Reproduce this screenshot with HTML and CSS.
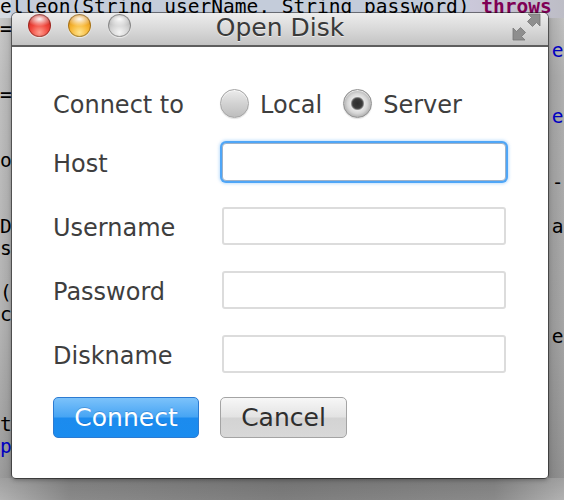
FILE: index.html
```html
<!DOCTYPE html>
<html>
<head>
<meta charset="utf-8">
<title>Open Disk</title>
<link rel="stylesheet" href="styles.css">
</head>
<body>
<div class="editor">
<div class="ln cur">elleon(String userName, String password) <b class="kw">throws</b></div>
<div class="ln">=</div>
<div class="ln"><span class="r fld">e</span></div>
<div class="ln"> </div>
<div class="ln">=</div>
<div class="ln"><span class="r fld">e</span></div>
<div class="ln"> </div>
<div class="ln">o</div>
<div class="ln"><span class="r">-</span></div>
<div class="ln"> </div>
<div class="ln">D<span class="r2">as</span></div>
<div class="ln">s</div>
<div class="ln"> </div>
<div class="ln">(</div>
<div class="ln">c</div>
<div class="ln"><span class="r">e</span></div>
<div class="ln"> </div>
<div class="ln"> </div>
<div class="ln"> </div>
<div class="ln">t</div>
<div class="ln fld">p</div>
</div>

<div class="window">
  <div class="titlebar">
    <div class="lights">
      <span class="light red"></span>
      <span class="light orange"></span>
      <span class="light gray"></span>
    </div>
    <div class="title">Open Disk</div>
    <svg class="resize" width="29" height="28" viewBox="0 0 29 28">
      <path d="M16 1 H28 V13 L24.5 9.5 L20.5 13.5 L15.5 8.5 L19.5 4.5 Z" fill="#8e8e8e" stroke="#777" stroke-width="0.8" stroke-linejoin="round"/>
      <path d="M13 27 H1 V15 L4.5 18.5 L8.5 14.5 L13.5 19.5 L9.5 23.5 Z" fill="#8e8e8e" stroke="#777" stroke-width="0.8" stroke-linejoin="round"/>
    </svg>
  </div>
  <div class="content">
    <div class="label">Connect to</div>
    <div class="radios">
      <label class="radio"><span class="dot"></span><span class="rt">Local</span></label>
      <label class="radio"><span class="dot on"></span><span class="rt">Server</span></label>
    </div>

    <div class="label">Host</div>
    <div class="field focus"></div>

    <div class="label">Username</div>
    <div class="field"></div>

    <div class="label">Password</div>
    <div class="field"></div>

    <div class="label">Diskname</div>
    <div class="field"></div>

    <div class="btnrow">
      <button class="btn primary">Connect</button>
      <button class="btn secondary">Cancel</button>
    </div>
  </div>
</div>
</body>
</html>
```

FILE: styles.css
```css
html {
  margin: 0;
  padding: 0;
  background: #c0c0c0;
}
body {
  margin: 0;
  padding: 0;
  width: 564px;
  height: 500px;
  overflow: hidden;
  position: relative;
  font-family: "DejaVu Sans", "Noto Sans", sans-serif;
}

/* editor page, darkened by the dialog's drop shadow */
.editor {
  margin-top: -4px;
  height: 504px;
  font: 19.5px/22px "DejaVu Sans Mono", monospace;
  color: #000;
  background-color: #c0c0c0;
  background-image:
    linear-gradient(to bottom, rgba(0, 0, 0, 0.1), rgba(0, 0, 0, 0)),
    linear-gradient(to right, #b2b2b2, #8a8a8a 70px, #7e7e7e 282px, #8a8a8a 494px, #b2b2b2),
    linear-gradient(to right, rgba(0, 0, 0, 0), rgba(0, 0, 0, 0.1)),
    linear-gradient(to bottom, #cdcdcd, #c0c0c0 80px, #b4b4b4 330px, #9c9c9c),
    linear-gradient(to right, rgba(0, 0, 0, 0.12), rgba(0, 0, 0, 0)),
    linear-gradient(to bottom, #c8c8c8, #b0b0b0 80px, #a6a6a6 330px, #939393);
  background-repeat: no-repeat;
  background-position:
    0 482px,
    0 482px,
    0 17px,
    0 0,
    548px 17px,
    548px 0;
  background-size:
    564px 22px,
    564px 22px,
    12px 465px,
    12px 482px,
    16px 465px,
    16px 482px;
}
.ln {
  height: 22px;
  white-space: pre;
}
.cur {
  background: linear-gradient(to right, #d6dae2 0, #d6dae2 11px, #c4ccda 11px, #c4ccda 470px, #cbc8da 470px, #bdbdc6 100%);
}
.kw {
  color: #7f0055;
  font-weight: bold;
}
.fld {
  color: #0000c0;
}
.r {
  margin-left: 47ch;
}
.r2 {
  margin-left: 46ch;
}

/* dialog window */
.window {
  position: absolute;
  left: 12px;
  top: 13px;
  width: 536px;
  height: 465px;
  background: #fff;
  border-radius: 5px 5px 4px 4px;
  overflow: hidden;
  box-shadow: 0 0 0 1px rgba(0, 0, 0, 0.45), 0 2px 4px rgba(0, 0, 0, 0.3);
}

.titlebar {
  height: 32px;
  border-bottom: 2px solid #5e5e5e;
  background: linear-gradient(#ededed, #d9d9d9 50%, #c3c3c3);
  display: grid;
  grid-template-columns: 1fr auto 1fr;
  align-items: start;
}
.lights {
  display: flex;
  gap: 17px;
  padding-left: 16px;
  padding-top: 1px;
}
.light {
  width: 23px;
  height: 23px;
  border-radius: 50%;
  box-shadow: inset 0 0 0 1px rgba(0, 0, 0, 0.3), 0 1px 1px rgba(255, 255, 255, 0.6);
}
.red {
  background:
    radial-gradient(ellipse 55% 32% at 50% 22%, rgba(255, 255, 255, 0.95), rgba(255, 255, 255, 0) 100%),
    radial-gradient(circle at 50% 80%, #ff9d8e 0%, #f0463c 42%, #c6241c 78%, #9a1812 100%);
}
.orange {
  background:
    radial-gradient(ellipse 55% 32% at 50% 22%, rgba(255, 255, 255, 0.95), rgba(255, 255, 255, 0) 100%),
    radial-gradient(circle at 50% 80%, #ffe48e 0%, #f7b634 42%, #d98b10 78%, #a96a08 100%);
}
.gray {
  background:
    radial-gradient(ellipse 55% 32% at 50% 22%, rgba(255, 255, 255, 0.95), rgba(255, 255, 255, 0) 100%),
    radial-gradient(circle at 50% 80%, #f4f4f4 0%, #d2d2d2 42%, #ababab 78%, #8c8c8c 100%);
}
.title {
  font-size: 25px;
  line-height: 29px;
  color: #3a3a3a;
  text-shadow: 0 1px 0 rgba(255, 255, 255, 0.6);
}
.resize {
  justify-self: end;
  margin-right: 7px;
  display: block;
}

/* form */
.content {
  display: grid;
  grid-template-columns: 169px 284px;
  grid-template-rows: 30px 40px 40px 40px 40px 41px;
  row-gap: 24px;
  padding: 41px 0 0 41px;
  align-items: center;
}
.label {
  font-size: 24px;
  color: #3e3e3e;
  padding-top: 4px;
}
.radios {
  display: flex;
  align-items: center;
  margin-left: -2px;
}
.radio {
  display: flex;
  align-items: center;
  font-size: 24px;
  color: #3e3e3e;
}
.radio + .radio {
  margin-left: 21px;
}
.rt {
  padding-top: 4px;
}
.dot {
  width: 29px;
  height: 29px;
  box-sizing: border-box;
  border-radius: 50%;
  margin-right: 11px;
  border: 1px solid #a3a3a3;
  background: linear-gradient(#ececec, #d2d2d2 50%, #bdbdbd);
  box-shadow: inset 0 1px 1px rgba(255, 255, 255, 0.8), 0 1px 1px rgba(0, 0, 0, 0.12);
}
.dot.on {
  border-color: #8f8f8f;
  background: radial-gradient(circle, #2e2e2e 0, #3a3a3a 4.5px, #5a5a5a 5.5px, #e6e6e6 7px, #d6d6d6 10px, #b2b2b2 13.5px);
}

.field {
  height: 38px;
  box-sizing: border-box;
  border: 2px solid #dcdcdc;
  border-radius: 3px;
  background: #fff;
}
.field.focus {
  border: 1px solid #9fb2c8;
  border-radius: 4px;
  box-shadow: 0 0 0 2px #4fa6f7, 0 0 3px 3px rgba(79, 166, 247, 0.35);
}

.btnrow {
  grid-column: 1 / -1;
  display: flex;
  gap: 21px;
  margin-top: -2px;
  height: 41px;
}
.btn {
  height: 41px;
  box-sizing: border-box;
  font: 25px "DejaVu Sans", "Noto Sans", sans-serif;
  border-radius: 5px;
  padding: 0;
  line-height: 1;
}
.primary {
  width: 146px;
  color: #fff;
  border: 1px solid #2c7bd2;
  background: linear-gradient(#7cc2fa, #47a5f4 48%, #1c8bee 52%, #1a8cef);
  text-shadow: 0 -1px 0 rgba(0, 60, 140, 0.25);
}
.secondary {
  width: 127px;
  color: #2e2e2e;
  border: 1px solid #a4a4a4;
  background: linear-gradient(#f7f7f7, #e3e3e3 48%, #d3d3d3 52%, #d8d8d8);
}
```
